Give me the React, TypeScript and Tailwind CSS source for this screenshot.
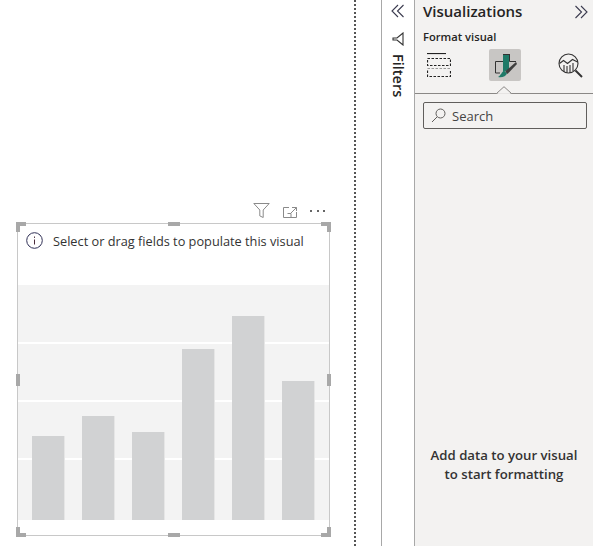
import React from "react";

const Handle = ({ className }: { className: string }) => (
  <div className={`absolute bg-[#a8a8a8] ${className}`} />
);

const Corner = ({ className }: { className: string }) => (
  <div className={`absolute h-[10px] w-[10px] border-[#a8a8a8] ${className}`} />
);

const heights = [84, 104, 88, 171, 204, 139];

export default function App() {
  return (
    <div className="flex h-[546px] w-[593px] overflow-hidden bg-white font-['Open_Sans',sans-serif] text-[#252423]">
      {/* Canvas */}
      <div className="flex w-[381px] shrink-0">
        <div className="flex w-[354px] shrink-0 flex-col pl-[17px]">
          <div className="flex h-[223px] w-[313px] items-end justify-end gap-[13px] pb-[5px] pr-[5px]">
            <svg width="17" height="15" viewBox="0 0 17 15" fill="none" stroke="#8a8a8a" strokeWidth="1">
              <path d="M0.8 0.5h15.4l-6 6.5v7.5l-3.4-1.6V7z" />
            </svg>
            <svg width="14" height="11" viewBox="0 0 14 11" fill="none" stroke="#8a8a8a" strokeWidth="1">
              <path d="M6 0.5H0.5v10h13V5M9 0.5h4.5V4M13.5 0.5L8 6M4.5 6.5h3.5v4" />
            </svg>
            <div className="flex h-[14px] w-[15px] items-center justify-between">
              <span className="h-[2px] w-[2px] bg-[#666]" />
              <span className="h-[2px] w-[2px] bg-[#666]" />
              <span className="h-[2px] w-[2px] bg-[#666]" />
            </div>
          </div>
          <div className="relative h-[313px] w-[313px] border border-[#c8c8c8]">
            <div className="flex h-[61px] items-start gap-[10px] pl-[8px] pt-[8px]">
              <svg width="17" height="17" viewBox="0 0 17 17" fill="none" className="shrink-0">
                <circle cx="8.5" cy="8.5" r="7.8" stroke="#2f2f55" strokeWidth="1" />
                <path d="M8.5 7.5v5" stroke="#4a2a3a" strokeWidth="1" />
                <path d="M8.5 4.5v1.4" stroke="#4a2a3a" strokeWidth="1" />
              </svg>
              <span className="text-[12.75px] leading-[18px] text-[#333]">Select or drag fields to populate this visual</span>
            </div>
            <div className="relative h-[235px] bg-[#f3f3f3]">
              <div className="absolute inset-x-0 top-[57px] h-[2px] bg-white" />
              <div className="absolute inset-x-0 top-[115px] h-[2px] bg-white" />
              <div className="absolute inset-x-0 top-[173px] h-[2px] bg-white" />
              <div className="relative flex h-full items-end gap-[18px] pl-[14px]">
                {heights.map((h, i) => (
                  <div key={i} className="w-[32px] bg-[#d1d2d3] shadow-[1px_0_0_#e6e6e6]" style={{ height: h }} />
                ))}
              </div>
            </div>
            <Handle className="left-[150px] top-[-2px] h-[4px] w-[12px]" />
            <Handle className="bottom-[-2px] left-[150px] h-[4px] w-[12px]" />
            <Handle className="left-[-2px] top-[150px] h-[12px] w-[4px]" />
            <Handle className="right-[-2px] top-[150px] h-[12px] w-[4px]" />
            <Corner className="left-[-2px] top-[-2px] border-l-[4px] border-t-[4px]" />
            <Corner className="right-[-2px] top-[-2px] border-r-[4px] border-t-[4px]" />
            <Corner className="bottom-[-2px] left-[-2px] border-b-[4px] border-l-[4px]" />
            <Corner className="bottom-[-2px] right-[-2px] border-b-[4px] border-r-[4px]" />
          </div>
        </div>
        <div className="h-full w-[2px] border-l-2 border-dotted border-[#555]" />
      </div>

      {/* Filters rail */}
      <div className="flex w-[34px] shrink-0 flex-col items-center border-x border-[#a8a8a8] bg-white">
        <svg width="14" height="14" viewBox="0 0 14 14" fill="none" stroke="#3b3b4f" strokeWidth="1.1" className="mt-[4px]">
          <path d="M7 1L1 7l6 6M12.5 1l-6 6 6 6" />
        </svg>
        <svg width="12" height="14" viewBox="0 0 12 14" fill="none" stroke="#333" strokeWidth="1.1" className="mt-[14px]">
          <path d="M11 1v12L5 8H1V6h4z" />
        </svg>
        <span className="mt-[8px] text-[14.5px] font-semibold leading-[18px] text-[#252423] [writing-mode:vertical-rl]">Filters</span>
      </div>

      {/* Visualizations pane */}
      <div className="flex min-w-0 flex-1 flex-col bg-[#f3f2f1]">
        <div className="flex h-[23px] items-center justify-between pl-[8px] pr-[5px]">
          <span className="text-[15px] font-semibold leading-[23px]">Visualizations</span>
          <svg width="14" height="14" viewBox="0 0 14 14" fill="none" stroke="#3b3b4f" strokeWidth="1.1">
            <path d="M1.5 1l6 6-6 6M7 1l6 6-6 6" />
          </svg>
        </div>
        <div className="pl-[8px] pt-[6px] text-[11.2px] font-semibold leading-[16px] text-[#252423]">Format visual</div>
        <div className="relative flex h-[49px] items-start border-b border-[#8a8886] pt-[4px]">
          <svg width="24" height="24" viewBox="0 0 24 24" fill="none" stroke="#222" strokeWidth="1.2" className="ml-[12px] mt-[4px]">
            <path d="M0 0.5H19" />
            <path d="M0.5 5.5h23v7h-23z" strokeDasharray="2.5 1.5" />
            <path d="M0.5 15.5h23" stroke="#999" strokeDasharray="2.5 1.5" />
            <path d="M0.5 17.5v6h23v-6" strokeDasharray="2.5 1.5" />
          </svg>
          <div className="ml-[38px] flex h-[32px] w-[32px] items-center justify-center rounded-[2px] bg-[#c8c6c4]">
            <svg width="26" height="26" viewBox="0 0 26 26" fill="none">
              <path d="M11 2.5h6v15l-6 3z" fill="#1f7a68" />
              <path d="M11 2.5h6M17.5 2v7.5h6.5M11 9.5H3.5v11.5H8" stroke="#333" strokeWidth="1" />
              <path d="M24 10L13 19.5l2.5 2.5L25 12z" fill="#3f3f3f" />
              <path d="M12.5 19.5l1.5 0-7 3z" fill="#f3f2f1" />
              <path d="M12.5 19c-3 .5-3 4-6.500 6 4 .8 8-.5 9-3.500z" fill="#1f7a68" />
            </svg>
          </div>
          <svg width="25" height="25" viewBox="0 0 25 25" fill="none" stroke="#333" strokeWidth="1.1" className="ml-[37px] mt-[4px]">
            <circle cx="10.500" cy="10.500" r="9.500" />
            <path d="M17.500 17.500l6.500 6.500" strokeWidth="2" />
            <path d="M1.500 10.500l4-3 4 3 5-4 5 2.500" />
            <path d="M6 12v7M9 13v6.500M12 12v8M15 10v8" />
          </svg>
          <svg width="16" height="8" viewBox="0 0 16 8" fill="#f3f2f1" stroke="#8a8886" strokeWidth="1" className="absolute bottom-[-1px] left-[81px]">
            <path d="M0.500 7.500L8 0.700l7.500 6.800" />
            <path d="M2 8h12" stroke="#f3f2f1" strokeWidth="1.500" />
          </svg>
        </div>
        <div className="pl-[8px] pr-[6px] pt-[8px]">
          <div className="flex h-[27px] items-center gap-[6px] rounded-[2px] border border-[#605e5c] pl-[7px]">
            <svg width="15" height="15" viewBox="0 0 15 15" fill="none" stroke="#605e5c" strokeWidth="1">
              <circle cx="9.500" cy="5.500" r="4.500" />
              <path d="M6 9l-5 5" />
            </svg>
            <span className="text-[13px] leading-[18px] text-[#444]">Search</span>
          </div>
        </div>
        <div className="mt-[317px] text-center text-[13.2px] font-semibold leading-[19px] text-[#333]">
          <div>Add data to your visual</div>
          <div>to start formatting</div>
        </div>
      </div>
    </div>
  );
}
